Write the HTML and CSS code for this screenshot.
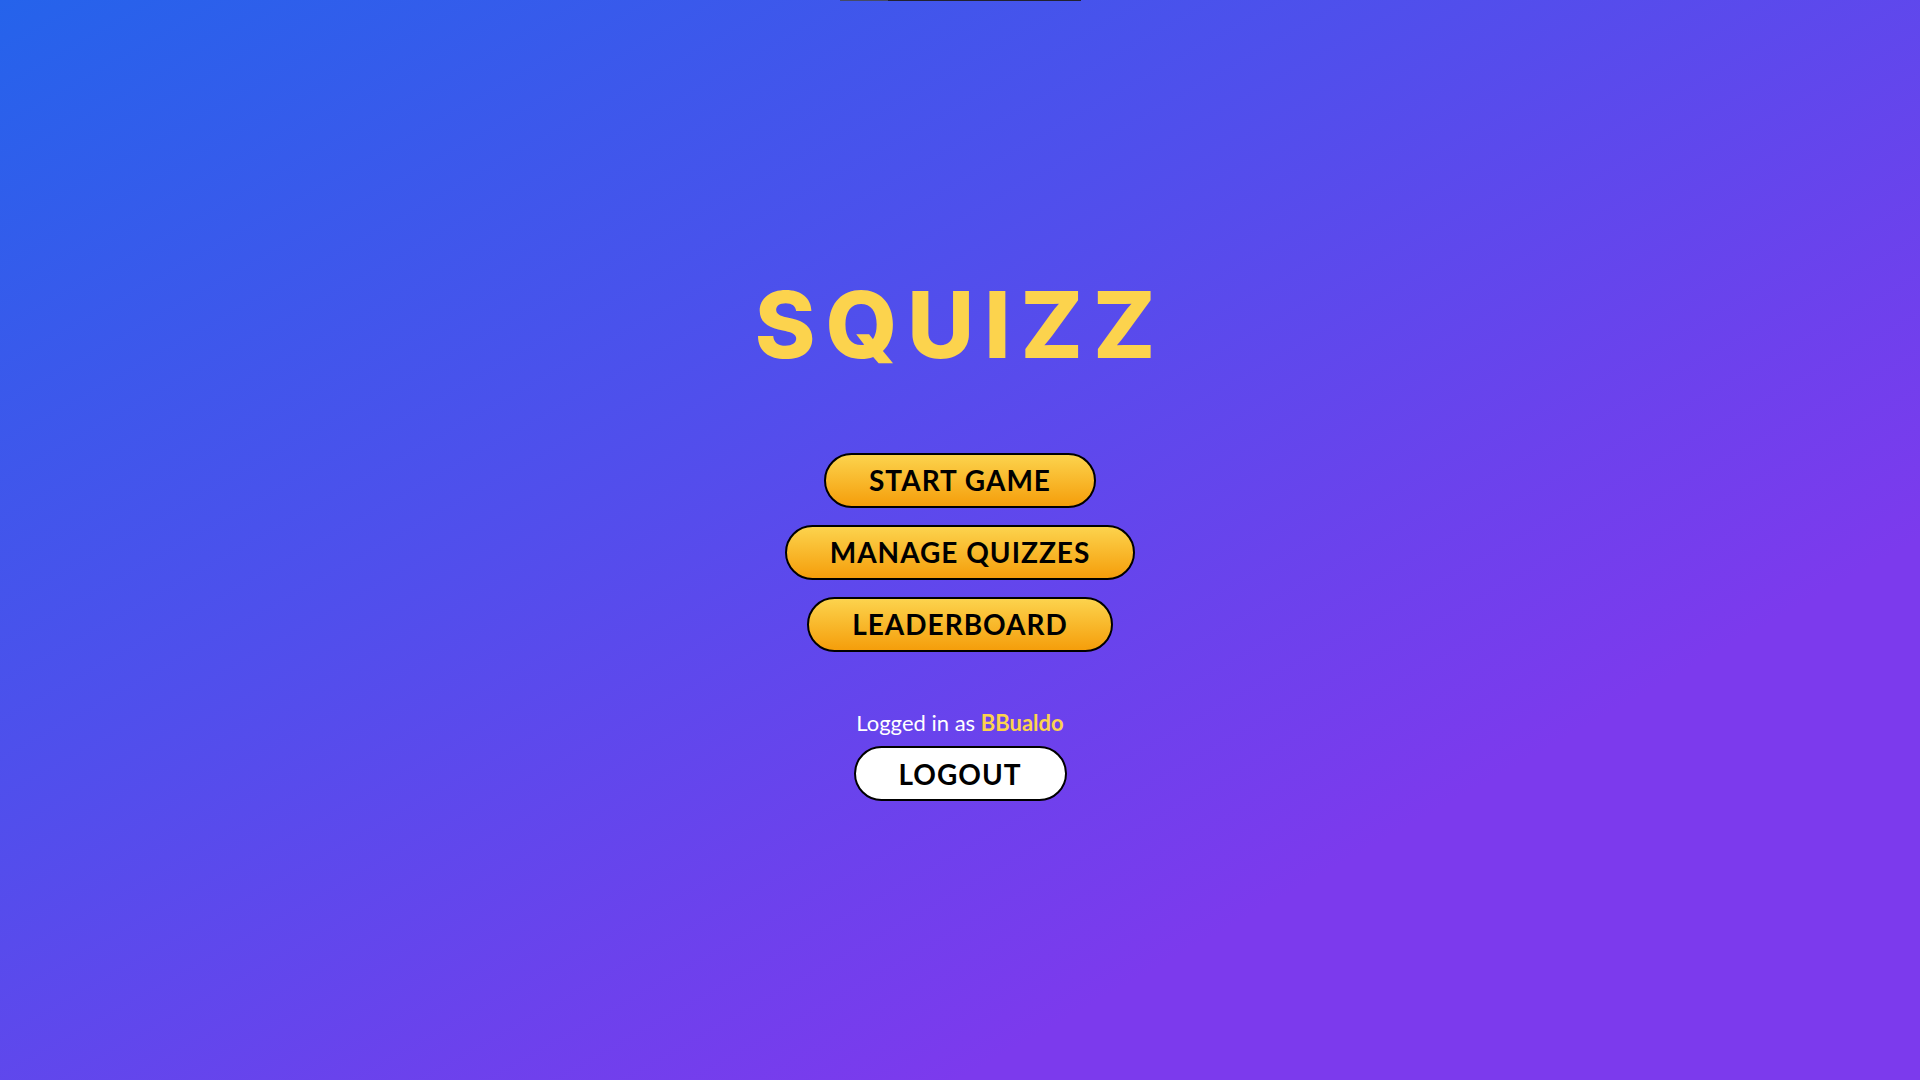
FILE: index.html
```html
<!DOCTYPE html>
<html lang="en">
<head>
<meta charset="utf-8">
<title>Squizz</title>
<link rel="stylesheet" href="styles.css">
</head>
<body>
<div class="topline"><span class="topline-a"></span><span class="topline-b"></span></div>
<main class="home">
  <h1 class="title">SQUIZZ</h1>
  <nav class="menu">
    <button class="btn btn-gold">START GAME</button>
    <button class="btn btn-gold">MANAGE QUIZZES</button>
    <button class="btn btn-gold">LEADERBOARD</button>
  </nav>
  <section class="session">
    <p class="session-text">Logged in as <strong class="user">BBualdo</strong></p>
    <button class="btn btn-white">LOGOUT</button>
  </section>
</main>
</body>
</html>
```
FILE: styles.css
```css
html, body {
  margin: 0;
  padding: 0;
  height: 100%;
}
body {
  background: linear-gradient(to bottom right, #2563eb 0%, #7c3aed 75%, #7c3aed 100%);
  font-family: "Lato", "Open Sans", sans-serif;
  overflow: hidden;
  position: relative;
}
.topline {
  position: absolute;
  top: 0;
  left: 840px;
  display: flex;
  height: 1px;
}
.topline-a { width: 48px; background: #444a66; }
.topline-b { width: 193px; background: #222230; }

.home {
  height: 100vh;
  display: flex;
  flex-direction: column;
  align-items: center;
  justify-content: center;
}
.title {
  margin: 0 0 82px;
  font-family: "Inter", sans-serif;
  font-weight: 800;
  font-size: 92px;
  line-height: 1;
  letter-spacing: 10px;
  color: #fcd34d;
}
.menu {
  display: flex;
  flex-direction: column;
  align-items: center;
  gap: 17px;
}
.btn {
  box-sizing: border-box;
  height: 55px;
  padding: 0 43px;
  border: 2px solid #000;
  border-radius: 999px;
  font-family: "Lato", sans-serif;
  font-weight: 700;
  font-size: 28px;
  letter-spacing: 1px;
  color: #000;
  display: flex;
  align-items: center;
  justify-content: center;
  cursor: pointer;
}
.btn-gold {
  background: linear-gradient(to bottom, #fcd34d, #f59e0b);
}
.btn-white {
  background: #fff;
  padding: 0 43px;
}
.session {
  margin-top: 58px;
  display: flex;
  flex-direction: column;
  align-items: center;
  gap: 10px;
}
.session-text {
  margin: 0;
  font-size: 22px;
  color: #fff;
  line-height: 1.2;
}
.user {
  color: #fcd34d;
  font-weight: 700;
}
```
